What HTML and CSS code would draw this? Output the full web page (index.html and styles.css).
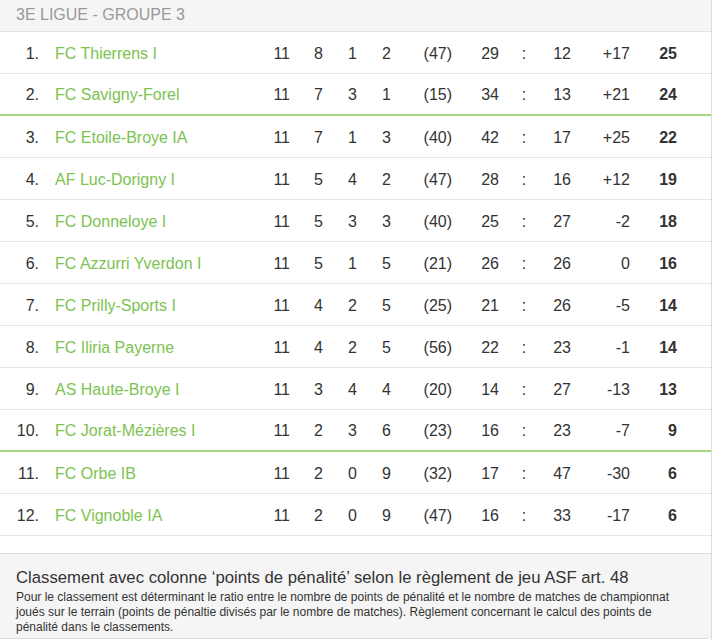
FILE: index.html
```html
<!DOCTYPE html>
<html lang="fr">
<head>
<meta charset="utf-8">
<title>3E LIGUE - GROUPE 3</title>
<link rel="stylesheet" href="styles.css">
</head>
<body>
<div class="panel">
  <div class="panel-head">3E LIGUE - GROUPE 3</div>
  <div class="table">
    <div class="row"><span class="rk">1.</span><span class="team">FC Thierrens I</span><span class="n">11</span><span class="n">8</span><span class="n">1</span><span class="n">2</span><span class="n">(47)</span><span class="n">29</span><span class="c">:</span><span class="n">12</span><span class="n">+17</span><span class="n pts">25</span></div>
    <div class="row promo"><span class="rk">2.</span><span class="team">FC Savigny-Forel</span><span class="n">11</span><span class="n">7</span><span class="n">3</span><span class="n">1</span><span class="n">(15)</span><span class="n">34</span><span class="c">:</span><span class="n">13</span><span class="n">+21</span><span class="n pts">24</span></div>
    <div class="row"><span class="rk">3.</span><span class="team">FC Etoile-Broye IA</span><span class="n">11</span><span class="n">7</span><span class="n">1</span><span class="n">3</span><span class="n">(40)</span><span class="n">42</span><span class="c">:</span><span class="n">17</span><span class="n">+25</span><span class="n pts">22</span></div>
    <div class="row"><span class="rk">4.</span><span class="team">AF Luc-Dorigny I</span><span class="n">11</span><span class="n">5</span><span class="n">4</span><span class="n">2</span><span class="n">(47)</span><span class="n">28</span><span class="c">:</span><span class="n">16</span><span class="n">+12</span><span class="n pts">19</span></div>
    <div class="row"><span class="rk">5.</span><span class="team">FC Donneloye I</span><span class="n">11</span><span class="n">5</span><span class="n">3</span><span class="n">3</span><span class="n">(40)</span><span class="n">25</span><span class="c">:</span><span class="n">27</span><span class="n">-2</span><span class="n pts">18</span></div>
    <div class="row"><span class="rk">6.</span><span class="team">FC Azzurri Yverdon I</span><span class="n">11</span><span class="n">5</span><span class="n">1</span><span class="n">5</span><span class="n">(21)</span><span class="n">26</span><span class="c">:</span><span class="n">26</span><span class="n">0</span><span class="n pts">16</span></div>
    <div class="row"><span class="rk">7.</span><span class="team">FC Prilly-Sports I</span><span class="n">11</span><span class="n">4</span><span class="n">2</span><span class="n">5</span><span class="n">(25)</span><span class="n">21</span><span class="c">:</span><span class="n">26</span><span class="n">-5</span><span class="n pts">14</span></div>
    <div class="row"><span class="rk">8.</span><span class="team">FC Iliria Payerne</span><span class="n">11</span><span class="n">4</span><span class="n">2</span><span class="n">5</span><span class="n">(56)</span><span class="n">22</span><span class="c">:</span><span class="n">23</span><span class="n">-1</span><span class="n pts">14</span></div>
    <div class="row"><span class="rk">9.</span><span class="team">AS Haute-Broye I</span><span class="n">11</span><span class="n">3</span><span class="n">4</span><span class="n">4</span><span class="n">(20)</span><span class="n">14</span><span class="c">:</span><span class="n">27</span><span class="n">-13</span><span class="n pts">13</span></div>
    <div class="row releg"><span class="rk">10.</span><span class="team">FC Jorat-Mézières I</span><span class="n">11</span><span class="n">2</span><span class="n">3</span><span class="n">6</span><span class="n">(23)</span><span class="n">16</span><span class="c">:</span><span class="n">23</span><span class="n">-7</span><span class="n pts">9</span></div>
    <div class="row"><span class="rk">11.</span><span class="team">FC Orbe IB</span><span class="n">11</span><span class="n">2</span><span class="n">0</span><span class="n">9</span><span class="n">(32)</span><span class="n">17</span><span class="c">:</span><span class="n">47</span><span class="n">-30</span><span class="n pts">6</span></div>
    <div class="row"><span class="rk">12.</span><span class="team">FC Vignoble IA</span><span class="n">11</span><span class="n">2</span><span class="n">0</span><span class="n">9</span><span class="n">(47)</span><span class="n">16</span><span class="c">:</span><span class="n">33</span><span class="n">-17</span><span class="n pts">6</span></div>
  </div>
  <div class="note">
    <div class="note-title">Classement avec colonne ‘points de pénalité’ selon le règlement de jeu ASF art. 48</div>
    <div class="note-text">Pour le classement est déterminant le ratio entre le nombre de points de pénalité et le nombre de matches de championnat joués sur le terrain (points de pénaltie divisés par le nombre de matches). Règlement concernant le calcul des points de pénalité dans le classements.</div>
  </div>
</div>
</body>
</html>
```

FILE: styles.css
```css
html, body {
  margin: 0;
  padding: 0;
  background: #ffffff;
}

body {
  font-family: "Liberation Sans", Arial, Helvetica, sans-serif;
  color: #333333;
}

.panel {
  width: 712px;
  border-right: 1px solid #dddddd;
  min-height: 640px;
  box-sizing: border-box;
  display: flex;
  flex-direction: column;
}

.panel-head {
  margin-top: -2px;
  height: 34px;
  box-sizing: border-box;
  background: #f5f5f5;
  border-bottom: 1px solid #e2e2e2;
  color: #999999;
  font-size: 16px;
  line-height: 34px;
  padding-left: 16px;
}

.table {
  display: flex;
  flex-direction: column;
}

.row {
  display: grid;
  grid-template-columns: 39px 221px 30px 33px 34px 34px 61px 47px 50px 22px 59px 47px 1fr;
  height: 42px;
  box-sizing: border-box;
  padding-top: 2px;
  border-bottom: 1px solid #e6e6e6;
  align-items: center;
  font-size: 16px;
  color: #333333;
}

.row.promo,
.row.releg {
  border-bottom: 2px solid #a6d884;
}

.rk {
  text-align: right;
}

.team {
  padding-left: 16px;
  color: #7cc350;
  white-space: nowrap;
}

.n {
  text-align: right;
}

.c {
  text-align: center;
}

.pts {
  font-weight: bold;
}

.note {
  margin-top: 17px;
  background: #f5f5f5;
  border-top: 1px solid #dddddd;
  border-bottom: 1px solid #dddddd;
  border-bottom-right-radius: 4px;
  padding: 14px 18px 3px 16px;
}

.note-title {
  font-size: 16.7px;
  line-height: 20px;
  color: #333333;
}

.note-text {
  margin-top: 2px;
  font-size: 12px;
  line-height: 15px;
  color: #333333;
}
```
